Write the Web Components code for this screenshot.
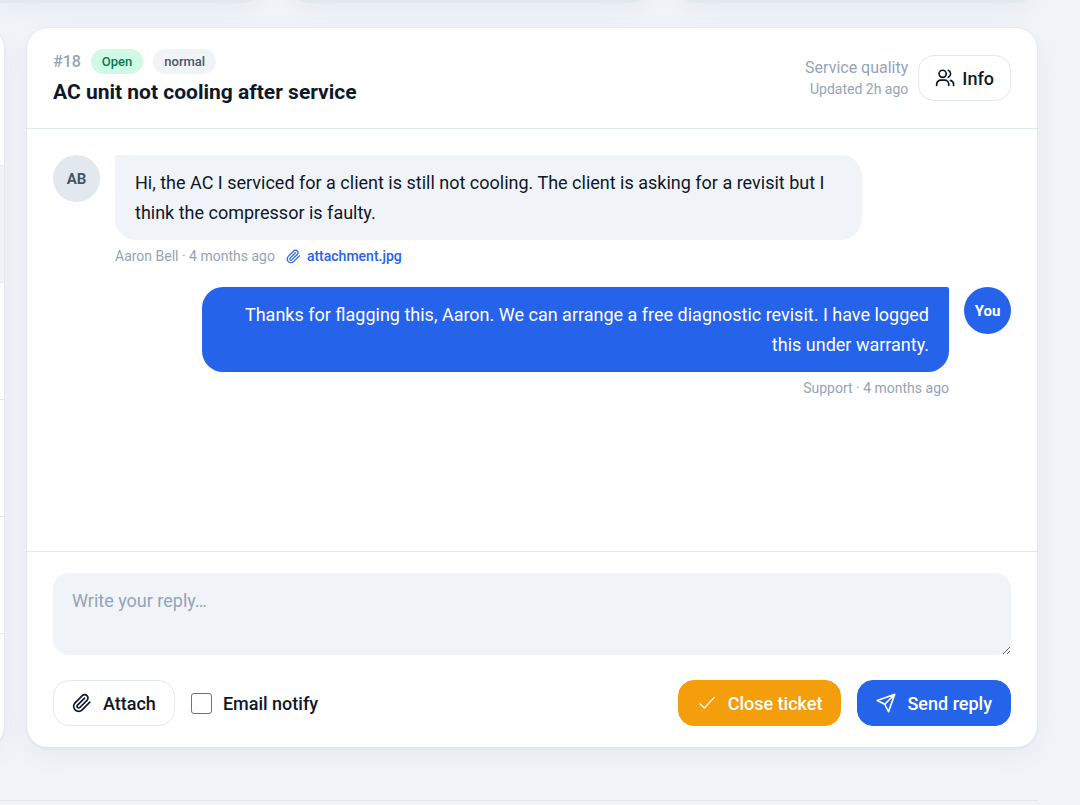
<!DOCTYPE html>
<html lang="en">
<head>
<meta charset="utf-8">
<title>Support ticket</title>
<style>
body { margin: 0; background: #f0f4f8; font-family: Roboto, sans-serif; color: #0f172a; }
</style>
</head>
<body>
<support-page></support-page>
<script>
const ICONS = {
  users: '<circle cx="9.2" cy="7" r="4.300"/><path d="M2 21v-1.500a5 5 0 0 1 5-5h4.500a5 5 0 0 1 5 5V21"/><path d="M16 2.800a4.600 4.600 0 0 1 0 8.400"/><path d="M18.500 14.800a5 5 0 0 1 3.800 4.700V21"/>',
  clip: '<path d="m21.400 11.050-9.190 9.190a6 6 0 0 1-8.490-8.490l8.570-8.570A4 4 0 1 1 18 8.840l-8.590 8.570a2 2 0 0 1-2.830-2.830l8.490-8.480"/>',
  check: '<path stroke-width="1.600" d="M3.500 13l5.300 5L20.500 5.500"/>',
  send: '<path d="M22.500 1.500 15 22.500l-4.500-9-9-4.500zM22.500 1.500 10.500 13.500"/>'
};

function define(name, css, html, setup) {
  const template = document.createElement('template');
  template.innerHTML = `<style>*{box-sizing:border-box}${css}</style>${html}`;
  customElements.define(name, class extends HTMLElement {
    connectedCallback() {
      if (this.shadowRoot) return;
      this.attachShadow({ mode: 'open' }).append(template.content.cloneNode(true));
      if (setup) setup(this, this.shadowRoot);
    }
  });
}

define('ui-icon', ':host{display:inline-flex;width:20px;height:20px;flex:none}svg{width:100%;height:100%}',
  '<svg viewBox="0 0 24 24" fill="none" stroke="currentColor" stroke-width="2" stroke-linecap="round" stroke-linejoin="round" aria-hidden="true"></svg>',
  (el, root) => { root.querySelector('svg').innerHTML = ICONS[el.getAttribute('name')]; });

define('ui-button', `
  :host{display:inline-flex}
  button{display:flex;align-items:center;gap:11px;height:46px;padding:0 18px;border:1px solid #e2e8f0;border-radius:16px;background:#fff;color:#0f172a;font:500 18px Roboto,sans-serif;white-space:nowrap;cursor:pointer}
  :host([compact]) button{gap:7px;padding:0 16px}
  :host([tone=warning]) button{background:#f59e0b;border-color:#f59e0b;color:#fff}
  :host([tone=primary]) button{background:#2563eb;border-color:#2563eb;color:#fff}`,
  '<button type="button"><slot name="icon"></slot><slot></slot></button>');

define('ui-badge', `
  :host{display:inline-flex;align-items:center;height:25px;padding:0 11px;border-radius:13px;background:#f0f4f8;color:#475569;font-size:13px;font-weight:500}
  :host([tone=success]){background:#d1fae5;color:#047857}`, '<slot></slot>');

define('user-avatar', `
  :host{display:flex;align-items:center;justify-content:center;flex:none;width:47px;height:47px;border-radius:50%;background:#e2e8f0;color:#475569;font-size:15px;font-weight:700}
  :host([own]){background:#2563eb;color:#fff}`, '<slot></slot>');

define('chat-message', `
  :host{display:flex;gap:15px;align-items:flex-start}
  :host([own]){flex-direction:row-reverse;text-align:right}
  .body{width:78%}
  .bubble{padding:13px 20px 12px;border-radius:2px 21px 21px 21px;background:#f0f4f8;font-size:18px;line-height:30px}
  :host([own]) .bubble{border-radius:21px 2px 21px 21px;background:#2563eb;color:#fff}
  .meta{display:flex;gap:11px;margin-top:6px;font-size:14px;line-height:21px;color:#94a3b8}
  :host([own]) .meta{justify-content:flex-end}`,
  '<slot name="avatar"></slot><div class="body"><div class="bubble"><slot></slot></div><div class="meta"><slot name="meta"></slot></div></div>');

define('file-link', `
  :host{display:inline-flex}
  a{display:flex;align-items:center;gap:6px;color:#2563eb;font-weight:500;text-decoration:none}
  ui-icon{width:15px;height:15px}`, '<a href="#attachment"><ui-icon name="clip"></ui-icon><slot></slot></a>');

define('ticket-header', `
  :host{display:flex;justify-content:space-between;align-items:center;padding:21px 26px;border-bottom:1px solid #e2e8f0}
  .tags{display:flex;align-items:center;gap:10px;margin-bottom:4px}
  .id{color:#94a3b8;font-size:16px;font-weight:500}
  h1{margin:0;font-size:21px;line-height:29px;font-weight:700}
  .side{display:flex;align-items:center;gap:10px}
  .info{text-align:right;color:#94a3b8;font-size:14px;line-height:21px}
  .topic{font-size:16px;line-height:22px}`, `
  <div><div class="tags"><span class="id">#18</span><ui-badge tone="success">Open</ui-badge><ui-badge>normal</ui-badge></div>
  <h1>AC unit not cooling after service</h1></div>
  <div class="side"><div class="info"><div class="topic">Service quality</div><div>Updated 2h ago</div></div>
  <ui-button compact><ui-icon slot="icon" name="users"></ui-icon>Info</ui-button></div>`);

define('reply-form', `
  :host{display:block;padding:21px 26px;border-top:1px solid #e2e8f0}
  textarea{display:block;width:100%;height:82px;padding:13px 19px;border:0;border-radius:16px;background:#f0f4f8;color:#0f172a;font:18px/30px Roboto,sans-serif;resize:vertical}
  textarea::placeholder{color:#94a3b8}
  .actions{display:flex;align-items:center;gap:16px;margin-top:25px}
  label{display:flex;align-items:center;gap:11px;margin-right:auto;font-size:18px;font-weight:500}
  input{appearance:none;width:21px;height:21px;margin:0;border:1px solid #64748b;border-radius:3px;background:#fff}
  input:checked{background:#2563eb}`, `
  <textarea aria-label="Reply" placeholder="Write your reply…"></textarea>
  <div class="actions"><ui-button><ui-icon slot="icon" name="clip"></ui-icon>Attach</ui-button>
  <label><input type="checkbox">Email notify</label>
  <ui-button tone="warning"><ui-icon slot="icon" name="check"></ui-icon>Close ticket</ui-button>
  <ui-button tone="primary"><ui-icon slot="icon" name="send"></ui-icon>Send reply</ui-button></div>`);

define('ticket-panel', `
  :host{display:flex;flex-direction:column;border:1px solid #e2e8f0;border-radius:22px;background:#fff;box-shadow:0 2px 1px #e2e8f0,0 8px 28px rgba(15,23,42,.04)}
  .thread{display:flex;flex-direction:column;gap:20px;flex:1;min-height:422px;padding:26px;box-sizing:border-box}`, `
  <ticket-header></ticket-header>
  <div class="thread">
    <chat-message><user-avatar slot="avatar">AB</user-avatar>Hi, the AC I serviced for a client is still not cooling. The client is asking for a revisit but I think the compressor is faulty.<span slot="meta">Aaron Bell · 4 months ago</span><file-link slot="meta">attachment.jpg</file-link></chat-message>
    <chat-message own><user-avatar slot="avatar" own>You</user-avatar>Thanks for flagging this, Aaron. We can arrange a free diagnostic revisit. I have logged this under warranty.<span slot="meta">Support · 4 months ago</span></chat-message>
  </div>
  <reply-form></reply-form>`);

define('ticket-list', `
  :host{display:flex;flex-direction:column;justify-self:end;width:60px;overflow:hidden;border:1px solid #e2e8f0;border-radius:22px;background:#fff;box-shadow:0 2px 1px #e2e8f0,0 8px 28px rgba(15,23,42,.04)}
  .row{height:117px;border-bottom:1px solid #e2e8f0}
  .row:first-of-type{height:138px}
  .active{background:#f0f4f8}`,
  '<div class="row"></div><div class="row active"></div><div class="row"></div><div class="row"></div><div class="row"></div>');

define('stat-cards', `
  :host{display:grid;grid-template-columns:266px 1fr 1fr;gap:22px;align-content:end;height:1px}
  div{height:60px;border:1px solid #e2e8f0;border-radius:22px;background:#fff;box-shadow:0 2px 1px #e2e8f0,0 8px 28px rgba(15,23,42,.04)}
  div:first-of-type{border-radius:0 0 22px 0}`, '<div></div><div></div><div></div>');

define('support-page', `
  :host{display:block;padding-right:42px}
  .columns{display:grid;grid-template-columns:5px 1fr;gap:21px;margin-top:26px}
  footer{height:4px;margin-top:52px;border-top:1px solid #e2e8f0}`,
  '<stat-cards></stat-cards><main class="columns"><ticket-list></ticket-list><ticket-panel></ticket-panel></main><footer></footer>');
</script>
</body>
</html>
